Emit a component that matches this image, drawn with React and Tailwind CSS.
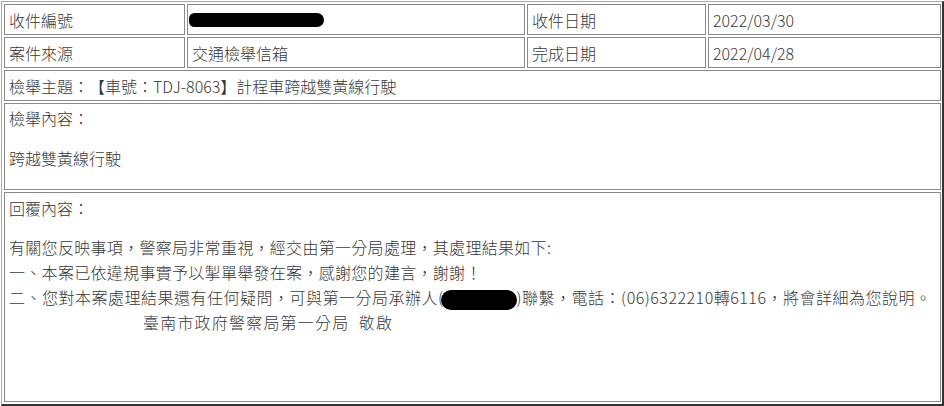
import React from "react";

const cell = "border border-[#8a8a8a] bg-white pl-[4px] text-[16px] text-[#383838]";

const Redact = ({ className }) => (
  <span className={"inline-block rounded-full bg-black align-middle " + className} />
);

const App = () => {
  return (
    <div
      className="min-h-[406px] w-[944px] bg-white pl-px pt-px font-light [text-spacing-trim:space-all]"
      style={{ fontFamily: '"Noto Sans CJK TC", "Noto Sans", sans-serif' }}
    >
      <div className="w-[943px] border-t border-l border-r-2 border-b-2 border-t-[#a8a8a8] border-l-[#a8a8a8] border-r-[#333] border-b-[#333] pt-[2px] pl-[2px] pr-px pb-[2px]">
        <div className="grid grid-cols-[181px_338px_179px_233px] grid-rows-[31px_31px_31px_87px_210px] gap-[2px]">
          <div className={cell + " flex items-center"}>收件編號</div>
          <div className={cell + " flex items-center"}>
            <Redact className="-ml-[3px] h-[14px] w-[135px] rounded-l-[7px] rounded-r-[9px]" />
          </div>
          <div className={cell + " flex items-center"}>收件日期</div>
          <div className={cell + " flex items-center"}>2022/03/30</div>

          <div className={cell + " flex items-center"}>案件來源</div>
          <div className={cell + " flex items-center"}>交通檢舉信箱</div>
          <div className={cell + " flex items-center"}>完成日期</div>
          <div className={cell + " flex items-center"}>2022/04/28</div>

          <div className={cell + " col-span-4 flex items-center"}>
            檢舉主題：【車號：TDJ-8063】計程車跨越雙黃線行駛
          </div>

          <div className={cell + " col-span-4 pt-[4px] leading-[20px]"}>
            <div>檢舉內容：</div>
            <div className="h-[20px]" />
            <div>跨越雙黃線行駛</div>
          </div>

          <div className={cell + " col-span-4 pt-[5px] leading-[20px]"}>
            <div>回覆內容：</div>
            <div className="mt-[17px] leading-[25px] tracking-[0.3px]">
              <div>有關您反映事項，警察局非常重視，經交由第一分局處理，其處理結果如下:</div>
              <div>一、本案已依違規事實予以掣單舉發在案，感謝您的建言，謝謝！</div>
              <div className="whitespace-nowrap tracking-[0.5px]">
                二、您對本案處理結果還有任何疑問，可與第一分局承辦人(
                <Redact className="-ml-[3px] h-[20px] w-[76px]" />
                )聯繫，電話：(06)6322210轉6116，將會詳細為您說明。
              </div>
              <div className="pl-[134px] tracking-[1.2px]">臺南市政府警察局第一分局&nbsp;&nbsp;敬啟</div>
            </div>
          </div>
        </div>
      </div>
    </div>
  );
};

export default App;
